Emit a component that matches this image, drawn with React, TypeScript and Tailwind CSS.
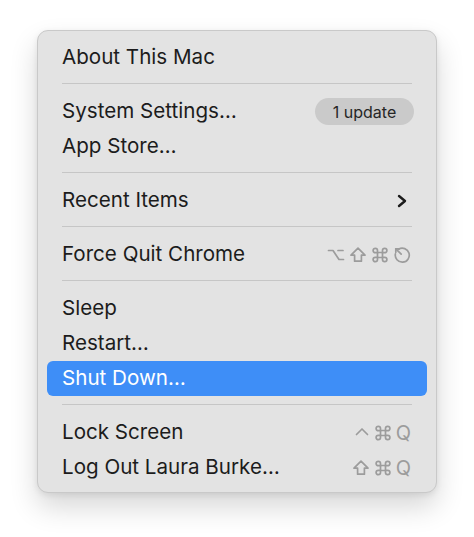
import React from 'react';

function Separator() {
  return (
    <div className="h-[19px] pt-[8px] px-[24px]">
      <div className="h-px bg-[#c6c6c6]" />
    </div>
  );
}

const ICON = {
  fill: 'none',
  stroke: '#9c9c9c',
  strokeWidth: 1.7,
  strokeLinecap: 'round' as const,
  strokeLinejoin: 'round' as const,
};

function OptionKey() {
  return (
    <svg width="18" height="18" viewBox="0 0 18 18" {...ICON}>
      <path d="M1.5 4.5h4.5l6 9h4.5M11 4.5h5" />
    </svg>
  );
}

function ShiftKey() {
  return (
    <svg width="18" height="18" viewBox="0 0 18 18" {...ICON}>
      <path d="M9 2.2L16 9.2h-3.6v6H5.6v-6H2z" />
    </svg>
  );
}

function CommandKey() {
  return (
    <svg width="18" height="18" viewBox="0 0 18 18" {...ICON}>
      <path d="M6.5 6.5h5v5h-5z" />
      <path d="M6.5 6.5v-2a2.2 2.2 0 1 0-2.2 2.2h2.2" />
      <path d="M11.5 6.5v-2a2.2 2.2 0 1 1 2.2 2.2h-2.2" />
      <path d="M6.5 11.5v2a2.2 2.2 0 1 1-2.2-2.2h2.2" />
      <path d="M11.5 11.5v2a2.2 2.2 0 1 0 2.2-2.2h-2.2" />
    </svg>
  );
}

function ControlKey() {
  return (
    <svg width="16" height="18" viewBox="0 0 16 18" {...ICON}>
      <path d="M2.5 10.5L8 5l5.5 5.5" />
    </svg>
  );
}

function EscKey() {
  return (
    <svg width="18" height="18" viewBox="0 0 18 18" {...ICON}>
      <path d="M5.6 3.2A7 7 0 1 1 2.4 7.8" />
      <path d="M2.8 2.8l5.4 5.4" />
      <path d="M2.8 2.8v3.4M2.8 2.8h3.4" />
    </svg>
  );
}

function Item({ label, right, active }: { label: string; right?: React.ReactNode; active?: boolean }) {
  return (
    <div
      className={`h-[35px] mx-[9px] pl-[15px] pr-[16px] flex items-center justify-between rounded-[6px] ${
        active ? 'bg-[#3e8ef7] text-white' : 'text-[#1c1c1c]'
      }`}
    >
      <span className="text-[20.6px] leading-none">{label}</span>
      {right}
    </div>
  );
}

function Keys({ children }: { children: React.ReactNode }) {
  return <span className="flex items-center gap-[4px] text-[20px] leading-none text-[#9c9c9c]">{children}</span>;
}

export default function App() {
  return (
    <div className="w-[474px] h-[537px] bg-white pt-[30px] pl-[37px] font-['Inter','Liberation_Sans',sans-serif]">
      <div className="w-[400px] h-[463px] rounded-[11px] bg-[#e3e3e3] border border-[#c9c9c9] shadow-[0_14px_28px_rgba(0,0,0,0.16),0_2px_6px_rgba(0,0,0,0.08)] pt-[9px] pb-[8px]">
        <Item label="About This Mac" />
        <Separator />
        <Item
          label="System Settings…"
          right={
            <span className="h-[27px] w-[99px] -mr-[3px] rounded-full bg-[#cacaca] text-[#262626] text-[16px] flex items-center justify-center">
              1 update
            </span>
          }
        />
        <Item label="App Store…" />
        <Separator />
        <Item
          label="Recent Items"
          right={
            <svg width="12" height="14" viewBox="0 0 12 14" fill="none" stroke="#1c1c1c" strokeWidth="2.4" strokeLinecap="round" strokeLinejoin="round" className="mr-[3px]">
              <path d="M3 2l6 5-6 5" />
            </svg>
          }
        />
        <Separator />
        <Item
          label="Force Quit Chrome"
          right={
            <Keys>
              <OptionKey />
              <ShiftKey />
              <CommandKey />
              <EscKey />
            </Keys>
          }
        />
        <Separator />
        <Item label="Sleep" />
        <Item label="Restart…" />
        <Item label="Shut Down…" active />
        <Separator />
        <Item
          label="Lock Screen"
          right={
            <Keys>
              <ControlKey />
              <CommandKey />
              <span>Q</span>
            </Keys>
          }
        />
        <Item
          label="Log Out Laura Burke…"
          right={
            <Keys>
              <ShiftKey />
              <CommandKey />
              <span>Q</span>
            </Keys>
          }
        />
      </div>
    </div>
  );
}
